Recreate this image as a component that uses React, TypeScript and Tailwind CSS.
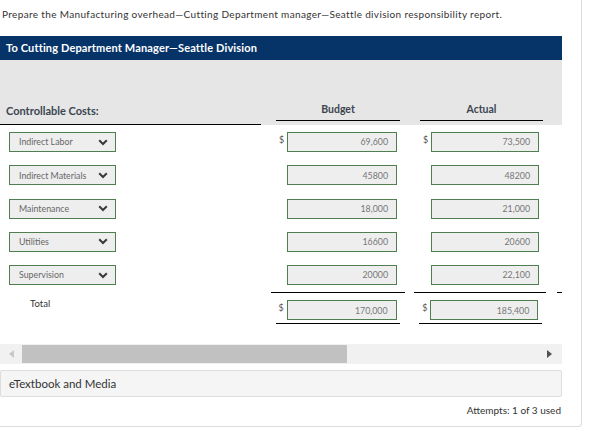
import React from 'react'

const ROWS = [
  { label: 'Indirect Labor', budget: '69,600', actual: '73,500', dollar: true },
  { label: 'Indirect Materials', budget: '45800', actual: '48200', dollar: false },
  { label: 'Maintenance', budget: '18,000', actual: '21,000', dollar: false },
  { label: 'Utilities', budget: '16600', actual: '20600', dollar: false },
  { label: 'Supervision', budget: '20000', actual: '22,100', dollar: false },
]

function Chevron() {
  return (
    <svg width="10" height="7" viewBox="0 0 10 7" className="shrink-0">
      <polyline points="1.2,1.2 5,5 8.8,1.2" fill="none" stroke="#3a3a3a" strokeWidth="2" />
    </svg>
  )
}

function SelectBox({ label }: { label: string }) {
  return (
    <div className="ml-[9px] flex h-[20px] w-[107px] items-center justify-between border border-[#4f7f4f] bg-[#eeeeee] pl-[9px] pr-[7px] text-[8.8px] text-[#666]">
      <span className="whitespace-nowrap">{label}</span>
      <Chevron />
    </div>
  )
}

function Amount({ value, dollar, width }: { value: string; dollar: boolean; width: string }) {
  return (
    <div className="flex items-start">
      <span className="w-[8px] pt-[1px] text-[9px] text-[#555]">{dollar ? '$' : ''}</span>
      <div className={`flex h-[20px] ${width} items-center justify-end border border-[#4f7f4f] bg-[#eeeeee] pr-[8px] text-[8.8px] text-[#777]`}>
        {value}
      </div>
    </div>
  )
}

export default function App() {
  return (
    <div className="h-[430px] w-[590px] bg-white" style={{ fontFamily: 'Lato, "Open Sans", sans-serif' }}>
      <div className="h-[427px] w-[582px] rounded-br-[4px] border-b border-r border-[#dcdcdc]">
        <div className="w-[562px]">
          <p className="whitespace-nowrap pl-[2px] pt-[8px] text-[10px] leading-[12px] tracking-[0.35px] text-[#333]">
            Prepare the Manufacturing overhead—Cutting Department manager—Seattle division responsibility report.
          </p>

          <div className="mt-[16px] flex h-[24px] items-center bg-[#073468] pl-[6px] text-[11px] font-bold tracking-[0.15px] text-white">
            To Cutting Department Manager—Seattle Division
          </div>

          <div className="flex h-[65px] items-end bg-[#e6e6e6]">
            <div className="w-[261px] border-b border-black pb-[5px] pl-[6px] text-[11px] font-bold text-[#3b4550]">
              Controllable Costs:
            </div>
            <div className="mb-[4px] ml-[15px] w-[124px] border-b border-black pb-[2px] text-center text-[10.5px] font-bold text-[#3b4550]">
              Budget
            </div>
            <div className="mb-[4px] ml-[20px] w-[123px] border-b border-black pb-[2px] text-center text-[10.5px] font-bold text-[#3b4550]">
              Actual
            </div>
          </div>

          <div className="pt-[7px]">
            {ROWS.map((row) => (
              <div key={row.label} className="flex h-[33.25px] items-start">
                <div className="w-[271px]">
                  <SelectBox label={row.label} />
                </div>
                <div className="ml-[8px] w-[144px]">
                  <Amount value={row.budget} dollar={row.dollar} width="w-[110px]" />
                </div>
                <Amount value={row.actual} dollar={row.dollar} width="w-[108px]" />
              </div>
            ))}
          </div>

          <div className="-mt-[6px] flex">
            <div className="w-[271px] pl-[30px] pt-[5px] text-[9.5px] text-[#333]">Total</div>
            <div className="w-[144px]">
              <div className="h-px w-[134px] bg-black" />
              <div className="mt-[7px] ml-[8px] flex flex-col">
                <Amount value="170,000" dollar width="w-[110px]" />
                <div className="ml-[-3px] mt-[3px] h-px w-[124px] bg-black" />
              </div>
            </div>
            <div className="w-[143px]">
              <div className="h-px w-[132px] bg-black" />
              <div className="mt-[7px] ml-[8px] flex flex-col">
                <Amount value="185,400" dollar width="w-[108px]" />
                <div className="ml-[-3px] mt-[3px] h-px w-[123px] bg-black" />
              </div>
            </div>
            <div className="h-px w-[5px] bg-black" />
          </div>

          <div className="mt-[20px] flex h-[20px] items-center bg-[#f1f1f1]">
            <div className="flex w-[22px] justify-center">
              <svg width="5" height="8" viewBox="0 0 5 8">
                <polygon points="5,0 0,4 5,8" fill="#c8c8c8" />
              </svg>
            </div>
            <div className="h-[18px] w-[325px] bg-[#c1c1c1]" />
            <div className="flex-1" />
            <div className="flex w-[26px] justify-center">
              <svg width="5" height="8" viewBox="0 0 5 8">
                <polygon points="0,0 5,4 0,8" fill="#505050" />
              </svg>
            </div>
          </div>

          <div className="mt-[6px] flex h-[27px] items-center rounded-[2px] border border-[#dddddd] bg-[#f5f5f5] pl-[8px] text-[11.5px] text-[#333]">
            eTextbook and Media
          </div>

          <div className="mt-[6px] pr-[1px] text-right text-[10px] text-[#333]">Attempts: 1 of 3 used</div>
        </div>
      </div>
    </div>
  )
}
